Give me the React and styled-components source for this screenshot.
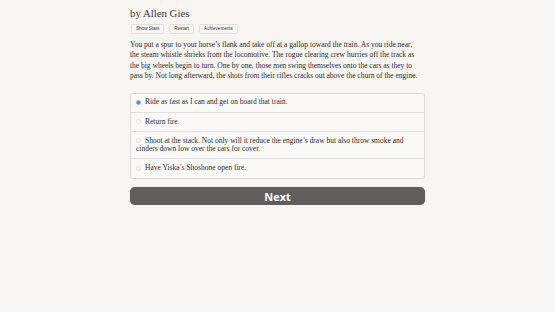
import React, { useState } from "react";
import styled, { createGlobalStyle } from "styled-components";

const Global = createGlobalStyle`
  html, body { margin: 0; padding: 0; background: #f7f4f1; }
  body { font-family: "Liberation Serif", "DejaVu Serif", serif; color: #2b2a28; }
`;

const Page = styled.div`
  width: 295px;
  margin: 0 auto;
  padding-top: 6px;
`;

const Author = styled.div`
  margin: 0;
  font-size: 10.8px;
  font-weight: 400;
  line-height: 14px;
  color: #3b3a37;
`;

const Toolbar = styled.div`
  display: flex;
  gap: 5px;
  margin-top: 4px;
  margin-left: 1px;
`;

const ToolButton = styled.button`
  font-family: "Liberation Sans", Arial, sans-serif;
  font-size: 4.6px;
  color: #333;
  background: #f8f6f4;
  border: 1px solid #e3e0dc;
  border-radius: 2px;
  padding: 0 4px;
  height: 10px;
  line-height: 8px;
`;

const Story = styled.p`
  margin: 6px 0 0;
  font-size: 7.5px;
  line-height: 10.4px;
  color: #2d2c2a;
  white-space: nowrap;
`;

const Choices = styled.div`
  margin-top: 11px;
  border: 1px solid #dcd9d5;
  border-radius: 3px;
  background: #faf9f7;
  overflow: hidden;
`;

const Choice = styled.label`
  display: block;
  padding: 4.8px 5px;
  font-size: 7.5px;
  line-height: 8.5px;
  color: #2d2c2a;
  border-top: ${(p) => (p.$first ? "none" : "1px solid #e2dfdb")};
`;

const Radio = styled.span`
  display: inline-block;
  width: 5px;
  height: 5px;
  border-radius: 50%;
  margin-right: 4px;
  vertical-align: -0.5px;
  box-sizing: border-box;
  background: ${(p) => (p.$checked ? "#3f8fd6" : "#fbfbfb")};
  border: ${(p) => (p.$checked ? "1.3px solid #7fb4e6" : "0.6px solid #e6e4e1")};
`;

const NextButton = styled.button`
  display: block;
  width: 100%;
  margin-top: 8px;
  height: 18px;
  border: none;
  border-radius: 5px;
  background: #5f5e5b;
  color: #fff;
  font-family: "Open Sans", "Liberation Sans", sans-serif;
  font-weight: 700;
  font-size: 11px;
  line-height: 18px;
  box-shadow: 0 0 1px rgba(0, 0, 0, 0.3);
`;

const storyLines = [
  "You put a spur to your horse\u2019s flank and take off at a gallop toward the train. As you ride near,",
  "the steam whistle shrieks from the locomotive. The rogue clearing crew hurries off the track as",
  "the big wheels begin to turn. One by one, those men swing themselves onto the cars as they to",
  "pass by. Not long afterward, the shots from their rifles cracks out above the churn of the engine.",
];

const options = [
  "Ride as fast as I can and get on board that train.",
  "Return fire.",
  "Shoot at the stack. Not only will it reduce the engine\u2019s draw but also throw smoke and cinders down low over the cars for cover.",
  "Have Yiska\u2019s Shoshone open fire.",
];

export default function App() {
  const [sel, setSel] = useState(0);
  return (
    <>
      <Global />
      <Page>
        <Author>by Allen Gies</Author>
        <Toolbar>
          <ToolButton>Show Stats</ToolButton>
          <ToolButton>Restart</ToolButton>
          <ToolButton>Achievements</ToolButton>
        </Toolbar>
        <Story>
          {storyLines.map((l, i) => (
            <React.Fragment key={i}>
              {l}
              {i < storyLines.length - 1 && <br />}
            </React.Fragment>
          ))}
        </Story>
        <Choices>
          {options.map((o, i) => (
            <Choice key={i} $first={i === 0} onClick={() => setSel(i)}>
              <Radio $checked={sel === i} />
              {o}
            </Choice>
          ))}
        </Choices>
        <NextButton>Next</NextButton>
      </Page>
    </>
  );
}
